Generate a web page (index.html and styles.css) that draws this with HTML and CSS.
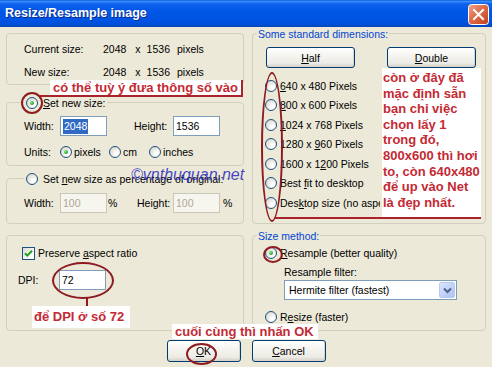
FILE: index.html
```html
<!DOCTYPE html>
<html>
<head>
<meta charset="utf-8">
<title>Resize/Resample image</title>
<link rel="stylesheet" href="styles.css">
</head>
<body>
<div class="titlebar">
  <span class="title">Resize/Resample image</span>
  <span class="close">
    <svg width="21" height="21" viewBox="0 0 21 21">
      <defs>
        <linearGradient id="cg" x1="0" y1="0" x2="1" y2="1">
          <stop offset="0" stop-color="#F2A58C"/>
          <stop offset="0.45" stop-color="#DE6C49"/>
          <stop offset="1" stop-color="#C23E1D"/>
        </linearGradient>
      </defs>
      <rect x="0.5" y="0.5" width="20" height="20" rx="3" fill="url(#cg)" stroke="#FFFFFF"/>
      <path d="M6 6 L15 15 M15 6 L6 15" stroke="#FFFFFF" stroke-width="2" stroke-linecap="square"/>
    </svg>
  </span>
</div>

<div class="main">
  <div class="col">
    <div class="group g1">
      <div class="info-row"><span class="lbl">Current size:</span><span class="dims"><span>2048</span><span class="dx">x</span><span class="dh">1536</span><span class="dp">pixels</span></span></div>
      <div class="info-row second"><span class="lbl">New size:</span><span class="dims"><span>2048</span><span class="dx">x</span><span class="dh">1536</span><span class="dp">pixels</span></span></div>
    </div>

    <div class="group g2">
      <div class="legend rlegend"><span class="radio checked"></span><span><u>S</u>et new size:</span></div>
      <div class="field-row first-field">
        <span class="flbl">Width:</span><span class="input"><span class="selected">2048</span></span>
        <span class="flbl hlbl">Height:</span><span class="input">1536</span>
      </div>
      <div class="units-row">
        <span>Units:</span>
        <span class="opt"><span class="radio checked"></span>pixels</span>
        <span class="opt"><span class="radio"></span>cm</span>
        <span class="opt"><span class="radio"></span>inches</span>
      </div>
    </div>

    <div class="group g3">
      <div class="legend rlegend"><span class="radio"></span><span>Set <u>n</u>ew size as percentage of original:</span></div>
      <div class="field-row pct-field">
        <span class="flbl">Width:</span><span class="input disabled">100</span><span class="pct">%</span>
        <span class="flbl plbl">Height:</span><span class="input disabled">100</span><span class="pct2">%</span>
      </div>
    </div>

    <div class="group g4">
      <div class="check-row"><span class="checkbox"><svg width="11" height="11" viewBox="0 0 11 11"><path d="M2 5.2 L4.3 7.6 L9 2.8" fill="none" stroke="#21A121" stroke-width="2"/></svg></span><span>Preserve <u>a</u>spect ratio</span></div>
      <div class="dpi-row"><span class="dlbl">DPI:</span><span class="input">72</span></div>
    </div>
  </div>

  <div class="col">
    <div class="group ga">
      <div class="legend tlegend">Some standard dimensions:</div>
      <div class="btn-row">
        <span class="btn wide"><u>H</u>alf</span>
        <span class="btn wide"><u>D</u>ouble</span>
      </div>
      <div class="radio-list">
        <div class="ritem"><span class="radio"></span><span class="rl"><u>6</u>40 x 480 Pixels</span></div>
        <div class="ritem"><span class="radio"></span><span class="rl"><u>8</u>00 x 600 Pixels</span></div>
        <div class="ritem"><span class="radio"></span><span class="rl"><u>1</u>024 x 768 Pixels</span></div>
        <div class="ritem"><span class="radio"></span><span class="rl">1280 x <u>9</u>60 Pixels</span></div>
        <div class="ritem"><span class="radio"></span><span class="rl">1600 x 1<u>2</u>00 Pixels</span></div>
        <div class="ritem"><span class="radio"></span><span class="rl">Best <u>f</u>it to desktop</span></div>
        <div class="ritem"><span class="radio"></span><span class="rl clip">Des<u>k</u>top size (no aspect ratio)</span></div>
      </div>
    </div>

    <div class="group gb">
      <div class="legend tlegend">Size method:</div>
      <div class="ritem sm first-sm"><span class="radio checked"></span><span><u>R</u>esample (better quality)</span></div>
      <div class="filter-lbl">Resample filter:</div>
      <div class="select"><span class="sel-text">Hermite filter (fastest)</span><span class="sel-btn"><svg width="9" height="7" viewBox="0 0 9 7"><path d="M1 1.5 L4.5 5 L8 1.5" fill="none" stroke="#4D6185" stroke-width="2"/></svg></span></div>
      <div class="ritem sm resize"><span class="radio"></span><span>R<u>e</u>size (faster)</span></div>
    </div>
  </div>
</div>

<div class="bottom">
  <span class="btn ok"><u>O</u>K</span>
  <span class="btn cancel"><u>C</u>ancel</span>
</div>

<div class="note note-set"><span class="note-text">có thể tuỳ ý đưa thông số vào</span></div>
<div class="ring ring-set"></div>
<div class="watermark">©vnthuquan.net</div>

<div class="ring ring-list"></div>
<div class="note-line"></div>
<div class="note-tick"></div>
<div class="note-box">còn ở đây đã<br>mặc định sẵn<br>bạn chỉ việc<br>chọn lấy 1<br>trong đó,<br>800x600 thì hơi<br>to, còn 640x480<br>để up vào Net<br>là đẹp nhất.</div>

<div class="ring ring-dpi"></div>
<div class="stem"></div>
<div class="note-dpi">để DPI ở số 72</div>

<div class="ring ring-resample"></div>
<div class="note-ok">cuối cùng thì nhấn OK</div>
<div class="ring ring-ok"></div>
</body>
</html>
```

FILE: styles.css
```css
* { box-sizing: border-box; }
html, body { margin: 0; padding: 0; }
body {
  width: 492px;
  height: 367px;
  overflow: hidden;
  position: relative;
  background: #ECE9D8;
  font-family: "Liberation Sans", Arial, sans-serif;
  font-size: 10.5px;
  color: #000;
}
u { text-decoration: underline; text-underline-offset: 1px; }

/* title bar */
.titlebar {
  height: 27px;
  display: flex;
  justify-content: space-between;
  align-items: flex-start;
  padding: 0 3px 0 5px;
  background: linear-gradient(to bottom, #0A5BD6 0%, #3A8DFA 5%, #0F62EB 14%, #0056E6 40%, #0054E3 75%, #0050D8 90%, #0A44B8 100%);
}
.title {
  color: #fff;
  font-weight: bold;
  font-size: 12.5px;
  line-height: 27px;
  text-shadow: 1px 1px 0 #0C2A8C;
}
.close { margin-top: 4px; width: 21px; height: 21px; display: block; }
.close svg { display: block; }

/* main layout */
.main {
  display: grid;
  grid-template-columns: 238px 234px;
  column-gap: 8px;
  padding: 6px 6px 0;
}
.col { display: flex; flex-direction: column; }

.group {
  border: 1px solid #D0D0BF;
  border-radius: 4px;
  display: flex;
  flex-direction: column;
  align-items: flex-start;
}
.legend {
  height: 14px;
  line-height: 14px;
  margin-top: -7px;
  background: #ECE9D8;
  display: flex;
  align-items: center;
}
.rlegend { padding: 0 2px; gap: 5px; }
.tlegend { margin-left: 4px; padding: 0 1px; color: #0046D5; }

/* controls */
.radio {
  width: 12px;
  height: 12px;
  flex: none;
  border-radius: 50%;
  border: 1px solid #1C5180;
  background: radial-gradient(circle at 70% 70%, #FFFFFF 15%, #E6E4DC 60%, #CFCCC1 100%);
  position: relative;
}
.radio.checked::after {
  content: "";
  position: absolute;
  left: 3px;
  top: 3px;
  width: 4px;
  height: 4px;
  border-radius: 50%;
  background: radial-gradient(circle at 35% 35%, #8BE88A, #21A121 70%);
}
.checkbox {
  width: 13px;
  height: 13px;
  flex: none;
  border: 1px solid #1C5180;
  background: linear-gradient(135deg, #DCDBD5, #FFFFFF 80%);
  display: flex;
  align-items: center;
  justify-content: center;
}
.checkbox svg { display: block; }
.input {
  width: 47px;
  height: 20px;
  flex: none;
  border: 1px solid #7F9DB9;
  background: #fff;
  line-height: 18px;
  padding-left: 2px;
}
.input.disabled { border-color: #C9C7BA; background: #F6F5EE; color: #ACA899; }
.selected { background: #316AC5; color: #fff; display: inline-block; line-height: 15px; padding: 0 1px; }

.btn {
  height: 21px;
  border: 1px solid #003C74;
  border-radius: 3px;
  background: linear-gradient(to bottom, #FFFFFF 0%, #F5F4EF 40%, #ECEBE6 80%, #D6D0C5 100%);
  box-shadow: inset -1px -1px 0 #D9D5CA;
  display: flex;
  align-items: center;
  justify-content: center;
}

/* group 1 */
.g1 { height: 52px; padding: 8px 0 0 17px; }
.info-row { height: 14px; line-height: 14px; display: flex; }
.info-row.second { margin-top: 9px; }
.lbl { width: 79px; }
.dims { display: flex; }
.dx { margin-left: 9px; }
.dh { margin-left: 6px; }
.dp { margin-left: 7px; }

/* group 2 */
.g2 { height: 64px; margin-top: 17px; padding-left: 17px; }
.field-row { display: flex; align-items: center; height: 20px; }
.first-field { margin-top: 6px; }
.flbl { width: 36px; flex: none; }
.hlbl { margin-left: 27px; width: 39px; }
.units-row {
  margin-top: 8px;
  height: 16px;
  display: grid;
  grid-template-columns: 36px 49px 40px auto;
  align-items: center;
}
.opt { display: flex; align-items: center; gap: 2px; }

/* group 3 */
.g3 { height: 46px; margin-top: 12px; padding-left: 17px; }
.pct-field { margin-top: 7px; }
.pct { width: 30px; padding-left: 1px; flex: none; }
.plbl { width: 36px; }
.pct2 { padding-left: 3px; }

/* group 4 */
.g4 { height: 96px; margin-top: 11px; padding: 10px 0 0 11px; }
.check-row { height: 14px; margin-left: 4px; display: flex; align-items: center; gap: 3px; }
.dpi-row { margin-top: 10px; height: 20px; display: flex; align-items: center; }
.dlbl { width: 41px; }

/* right group A */
.ga { height: 191px; }
.btn-row { margin-top: 6px; padding-left: 13px; display: flex; gap: 32px; }
.btn.wide { width: 89px; }
.radio-list { margin-top: 8px; padding-left: 12px; display: flex; flex-direction: column; }
.ritem { height: 19.5px; display: flex; align-items: center; gap: 3px; white-space: nowrap; }
.rl.clip { display: block; max-width: 100px; overflow: hidden; }

/* right group B */
.gb { height: 96px; margin-top: 11px; }
.ritem.sm { height: 14px; padding-left: 12px; }
.first-sm { margin-top: 3px; }
.filter-lbl { margin-top: 5px; height: 14px; line-height: 14px; padding-left: 31px; }
.select {
  margin-top: 1px;
  margin-left: 31px;
  width: 173px;
  height: 20px;
  border: 1px solid #7F9DB9;
  background: #fff;
  display: flex;
  align-items: center;
  justify-content: space-between;
  padding: 0 1px 0 4px;
}
.sel-btn {
  width: 16px;
  height: 16px;
  border: 1px solid #B7CBF2;
  border-radius: 2px;
  background: linear-gradient(135deg, #DCE7FD, #B9CCF8 70%, #AFC4F3);
  display: flex;
  align-items: center;
  justify-content: center;
}
.sel-btn svg { display: block; }
.ritem.resize { margin-top: 10px; }

/* bottom buttons */
.bottom { margin-top: 9px; display: flex; justify-content: center; gap: 11px; }
.bottom .btn { width: 74px; height: 22px; }

/* annotations (overlays) */
.note {
  position: absolute;
  left: 40px;
  top: 80px;
  width: 203px;
  height: 17px;
  border-bottom: 2px solid #A8232A;
  border-right: 2px solid #A8232A;
  padding-left: 10px;
}
.note-text, .note-box, .note-dpi, .note-ok {
  font-weight: bold;
  font-size: 13px;
  color: #C42A33;
}
.note-text {
  display: block;
  background: #fff;
  height: 15px;
  line-height: 15px;
  padding-left: 3px;
  white-space: nowrap;
  width: 191px;
}
.ring {
  position: absolute;
  border: 2px solid #8E1B1F;
  border-radius: 50%;
}
.ring-set { left: 21px; top: 92px; width: 22px; height: 22px; }
.ring-list { left: 261px; top: 72px; width: 22px; height: 150px; }
.ring-dpi { left: 52px; top: 262px; width: 62px; height: 37px; }
.ring-resample { left: 263px; top: 246px; width: 20px; height: 17px; }
.ring-ok { left: 186px; top: 343px; width: 31px; height: 22px; }

.watermark {
  position: absolute;
  left: 131px;
  top: 166px;
  font-family: "Liberation Sans", Arial, sans-serif;
  font-style: italic;
  font-size: 16px;
  color: rgba(40, 40, 190, 0.85);
  white-space: nowrap;
}

.note-box {
  position: absolute;
  left: 382px;
  top: 68px;
  width: 99px;
  height: 149px;
  background: #fff;
  padding: 2px 0 0 1px;
  line-height: 15.6px;
  white-space: nowrap;
}
.note-line {
  position: absolute;
  left: 274px;
  top: 217px;
  width: 207px;
  height: 2px;
  background: #A8232A;
}
.note-tick {
  position: absolute;
  left: 479px;
  top: 194px;
  width: 2px;
  height: 24px;
  background: #A8232A;
}
.stem {
  position: absolute;
  left: 86px;
  top: 298px;
  width: 2px;
  height: 9px;
  background: #8E1B1F;
}
.note-dpi {
  position: absolute;
  left: 32px;
  top: 306px;
  width: 98px;
  height: 22px;
  line-height: 22px;
  background: #fff;
  padding-left: 2px;
  white-space: nowrap;
}
.note-ok {
  position: absolute;
  left: 172px;
  top: 324px;
  width: 146px;
  height: 15px;
  line-height: 15px;
  background: #fff;
  padding-left: 3px;
  white-space: nowrap;
}
```
